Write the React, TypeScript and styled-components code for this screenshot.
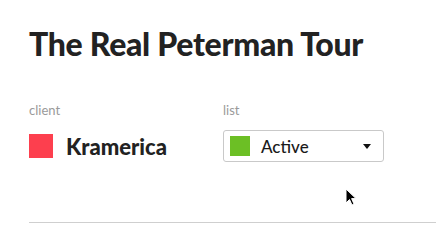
import { FC } from 'react'
import styled, { createGlobalStyle } from 'styled-components'

const GlobalStyle = createGlobalStyle`
  body {
    margin: 0;
    background: #fff;
    font-family: Lato, "Liberation Sans", sans-serif;
    color: #222;
  }
`

type SwatchProps = { $color: string; $size: number }

const Page = styled.div`
  position: relative;
  width: 436px;
  height: 252px;
  padding: 24px 0 0 29px;
  box-sizing: border-box;
  overflow: hidden;
`

const Title = styled.h1`
  margin: 0;
  font-size: 32px;
  font-weight: 900;
  letter-spacing: -0.3px;
  line-height: 40px;
  color: #222;
`

const Fields = styled.div`
  display: flex;
  margin-top: 38px;
`

const Field = styled.div<{ $width?: number }>`
  display: flex;
  flex-direction: column;
  width: ${(p) => (p.$width ? `${p.$width}px` : 'auto')};
`

const Label = styled.span`
  font-size: 13px;
  line-height: 16px;
  color: #9a9a9a;
`

const ClientRow = styled.div`
  display: flex;
  align-items: center;
  gap: 13px;
  margin-top: 12px;
  height: 32px;
`

const Swatch = styled.span<SwatchProps>`
  display: block;
  width: ${(p) => p.$size}px;
  height: ${(p) => p.$size}px;
  background: ${(p) => p.$color};
  flex-shrink: 0;
`

const ClientName = styled.span`
  font-size: 22px;
  font-weight: 900;
  color: #222;
`

const Select = styled.div`
  display: flex;
  align-items: center;
  box-sizing: border-box;
  width: 161px;
  height: 32px;
  margin-top: 12px;
  padding: 0 12px 0 6px;
  border: 1px solid #c9c9c9;
  border-radius: 3px;
  background: #fff;
`

const SelectText = styled.span`
  flex: 1;
  margin-left: 11px;
  font-size: 17px;
  font-weight: 500;
  color: #1a1a1a;
`

const Caret = styled.span`
  width: 0;
  height: 0;
  border-left: 4.5px solid transparent;
  border-right: 4.5px solid transparent;
  border-top: 5px solid #111;
`

const Divider = styled.hr`
  margin: 60px 0 0;
  border: 0;
  border-top: 1.5px solid #cfcfcf;
`

const Cursor = styled.svg`
  position: absolute;
  left: 345px;
  top: 188px;
`

const App: FC = () => (
  <>
    <GlobalStyle />
    <Page>
      <Title>The Real Peterman Tour</Title>
      <Fields>
        <Field $width={194}>
          <Label>client</Label>
          <ClientRow>
            <Swatch $color="#fd3f4e" $size={24} />
            <ClientName>Kramerica</ClientName>
          </ClientRow>
        </Field>
        <Field>
          <Label>list</Label>
          <Select>
            <Swatch $color="#6cbf25" $size={20} />
            <SelectText>Active</SelectText>
            <Caret />
          </Select>
        </Field>
      </Fields>
      <Divider />
      <Cursor width="12" height="19" viewBox="0 0 12 19">
        <path d="M1 1 L1 15 L4.5 11.5 L7 17 L9 16 L6.6 10.6 L11 10.6 Z" fill="#000" stroke="#fff" strokeWidth="1" />
      </Cursor>
    </Page>
  </>
)

export default App
